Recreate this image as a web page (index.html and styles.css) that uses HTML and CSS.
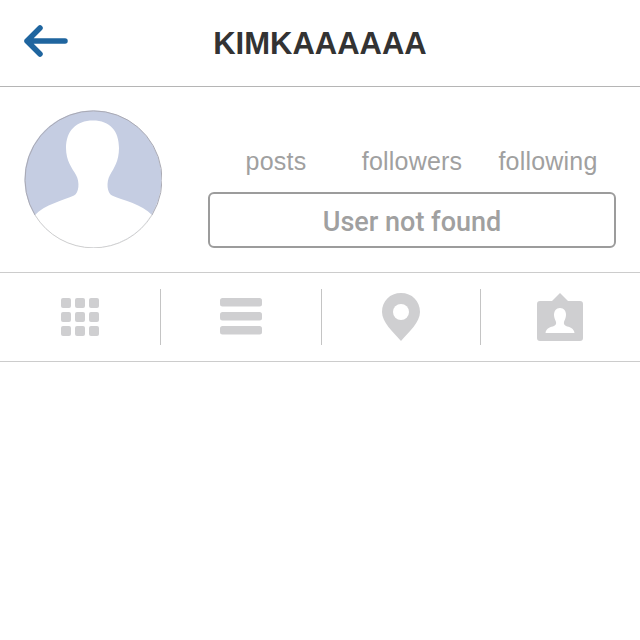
FILE: index.html
```html
<!DOCTYPE html>
<html lang="en">
<head>
    <meta charset="UTF-8">
    <title>KIMKAAAAAA</title>
    <link rel="stylesheet" href="styles.css">
</head>
<body>
    <header class="topbar">
        <svg class="back-icon" width="46" height="38" viewBox="0 0 46 38">
            <path d="M43 19H5M18 6L5 19L18 32" fill="none" stroke="#1f659f" stroke-width="5.500" stroke-linecap="round" stroke-linejoin="round"/>
        </svg>
        <h1 class="username">KIMKAAAAAA</h1>
    </header>

    <section class="profile">
        <svg class="avatar" width="138" height="138" viewBox="0 0 138 138">
            <clipPath id="avatar-clip"><circle cx="69" cy="69" r="68.5"/></clipPath>
            <g clip-path="url(#avatar-clip)">
                <rect width="138" height="138" fill="#c5cde2"/>
                <path d="M69 10.500C86 10.500 95 21 95 38C95 51 90 58 86 65C82 72 83 83 88 85.500C98 90 118 94 128 105L138 138L0 138L11 105C20 95 40 90 50 85.500C55 83 56 72 52 65C48 58 42 51 42 38C42 21 52 10.500 69 10.500Z" fill="#fff"/>
            </g>
            <path d="M11 105A68.500 68.500 0 1 1 128 105" fill="none" stroke="#a9a9b3" stroke-width="1"/>
            <path d="M128 105A68.500 68.500 0 0 1 11 105" fill="none" stroke="#cfcfcf" stroke-width="1"/>
        </svg>
        <div class="profile-info">
            <div class="stats">
                <span class="stat">posts</span>
                <span class="stat">followers</span>
                <span class="stat">following</span>
            </div>
            <div class="not-found">User not found</div>
        </div>
    </section>

    <nav class="tabs">
        <div class="tab">
            <svg width="40" height="40" viewBox="0 0 40 40" fill="#cfcfd1">
                <rect x="1" y="1" width="10" height="10" rx="2"/><rect x="15" y="1" width="10" height="10" rx="2"/><rect x="29" y="1" width="10" height="10" rx="2"/>
                <rect x="1" y="15" width="10" height="10" rx="2"/><rect x="15" y="15" width="10" height="10" rx="2"/><rect x="29" y="15" width="10" height="10" rx="2"/>
                <rect x="1" y="29" width="10" height="10" rx="2"/><rect x="15" y="29" width="10" height="10" rx="2"/><rect x="29" y="29" width="10" height="10" rx="2"/>
            </svg>
        </div>
        <div class="tab">
            <svg width="42" height="38" viewBox="0 0 42 38" fill="#cfcfd1">
                <rect y="0" width="42" height="8.500" rx="2.500"/><rect y="14" width="42" height="8.500" rx="2.500"/><rect y="28" width="42" height="8.500" rx="2.500"/>
            </svg>
        </div>
        <div class="tab">
            <svg width="38" height="48" viewBox="0 0 38 48">
                <path d="M19 0C30 0 38 8 38 19C38 29 27 39 19 48C11 39 0 29 0 19C0 8 8 0 19 0Z" fill="#cfcfd1"/>
                <circle cx="19" cy="19" r="8" fill="#fff"/>
            </svg>
        </div>
        <div class="tab">
            <svg class="contact-icon" width="46" height="48" viewBox="0 0 46 48">
                <path d="M3 8H15L23 0L31 8H43C45 8 46 9 46 11V45C46 47 45 48 43 48H3C1 48 0 47 0 45V11C0 9 1 8 3 8Z" fill="#cfcfd1"/>
                <path d="M23 15C27 15 29 18 29 22C29 25 27.500 27 27 29C26.500 31 27.500 32 29 33C32 34 37 35 37.500 40H8.500C9 35 14 34 17 33C18.500 32 19.500 31 19 29C18.500 27 17 25 17 22C17 18 19 15 23 15Z" fill="#fff"/>
            </svg>
        </div>
    </nav>
</body>
</html>
```

FILE: styles.css
```css
body {
    margin: 0;
    background-color: #fff;
    font-family: 'Liberation Sans', Arial, sans-serif;
    color: #999;
}
.topbar {
    height: 87px;
    box-sizing: border-box;
    border-bottom: 1px solid #b5b5b5;
    display: flex;
    align-items: center;
    justify-content: center;
    position: relative;
}
.back-icon {
    position: absolute;
    left: 22px;
    top: 22px;
}
.username {
    margin: 2px 0 0;
    font-size: 31px;
    font-weight: 700;
    color: #333;
}
.profile {
    height: 186px;
    box-sizing: border-box;
    padding: 23px 24px 0;
    display: flex;
    gap: 46px;
    border-bottom: 1px solid #ccc;
}
.avatar {
    flex-shrink: 0;
}
.profile-info {
    width: 408px;
    padding-top: 36px;
}
.stats {
    display: flex;
    height: 46px;
}
.stat {
    flex: 1;
    text-align: center;
    font-size: 25px;
    line-height: 30px;
    letter-spacing: 0.2px;
    color: #a0a0a0;
}
.not-found {
    height: 56px;
    box-sizing: border-box;
    padding-top: 4px;
    border: 2px solid #9c9c9c;
    border-radius: 6px;
    display: flex;
    align-items: center;
    justify-content: center;
    font-family: Roboto, 'Liberation Sans', sans-serif;
    font-size: 27px;
    font-weight: 500;
    color: #a0a0a0;
}
.tabs {
    height: 89px;
    box-sizing: border-box;
    padding: 16px 0;
    display: grid;
    grid-template-columns: 160px 161px 159px 160px;
    border-bottom: 1px solid #ccc;
}
.tab {
    display: flex;
    align-items: center;
    justify-content: center;
    border-left: 1px solid #c4c4c4;
}
.tab:first-child {
    border-left: none;
}
.contact-icon {
    margin-right: 1px;
}
```
